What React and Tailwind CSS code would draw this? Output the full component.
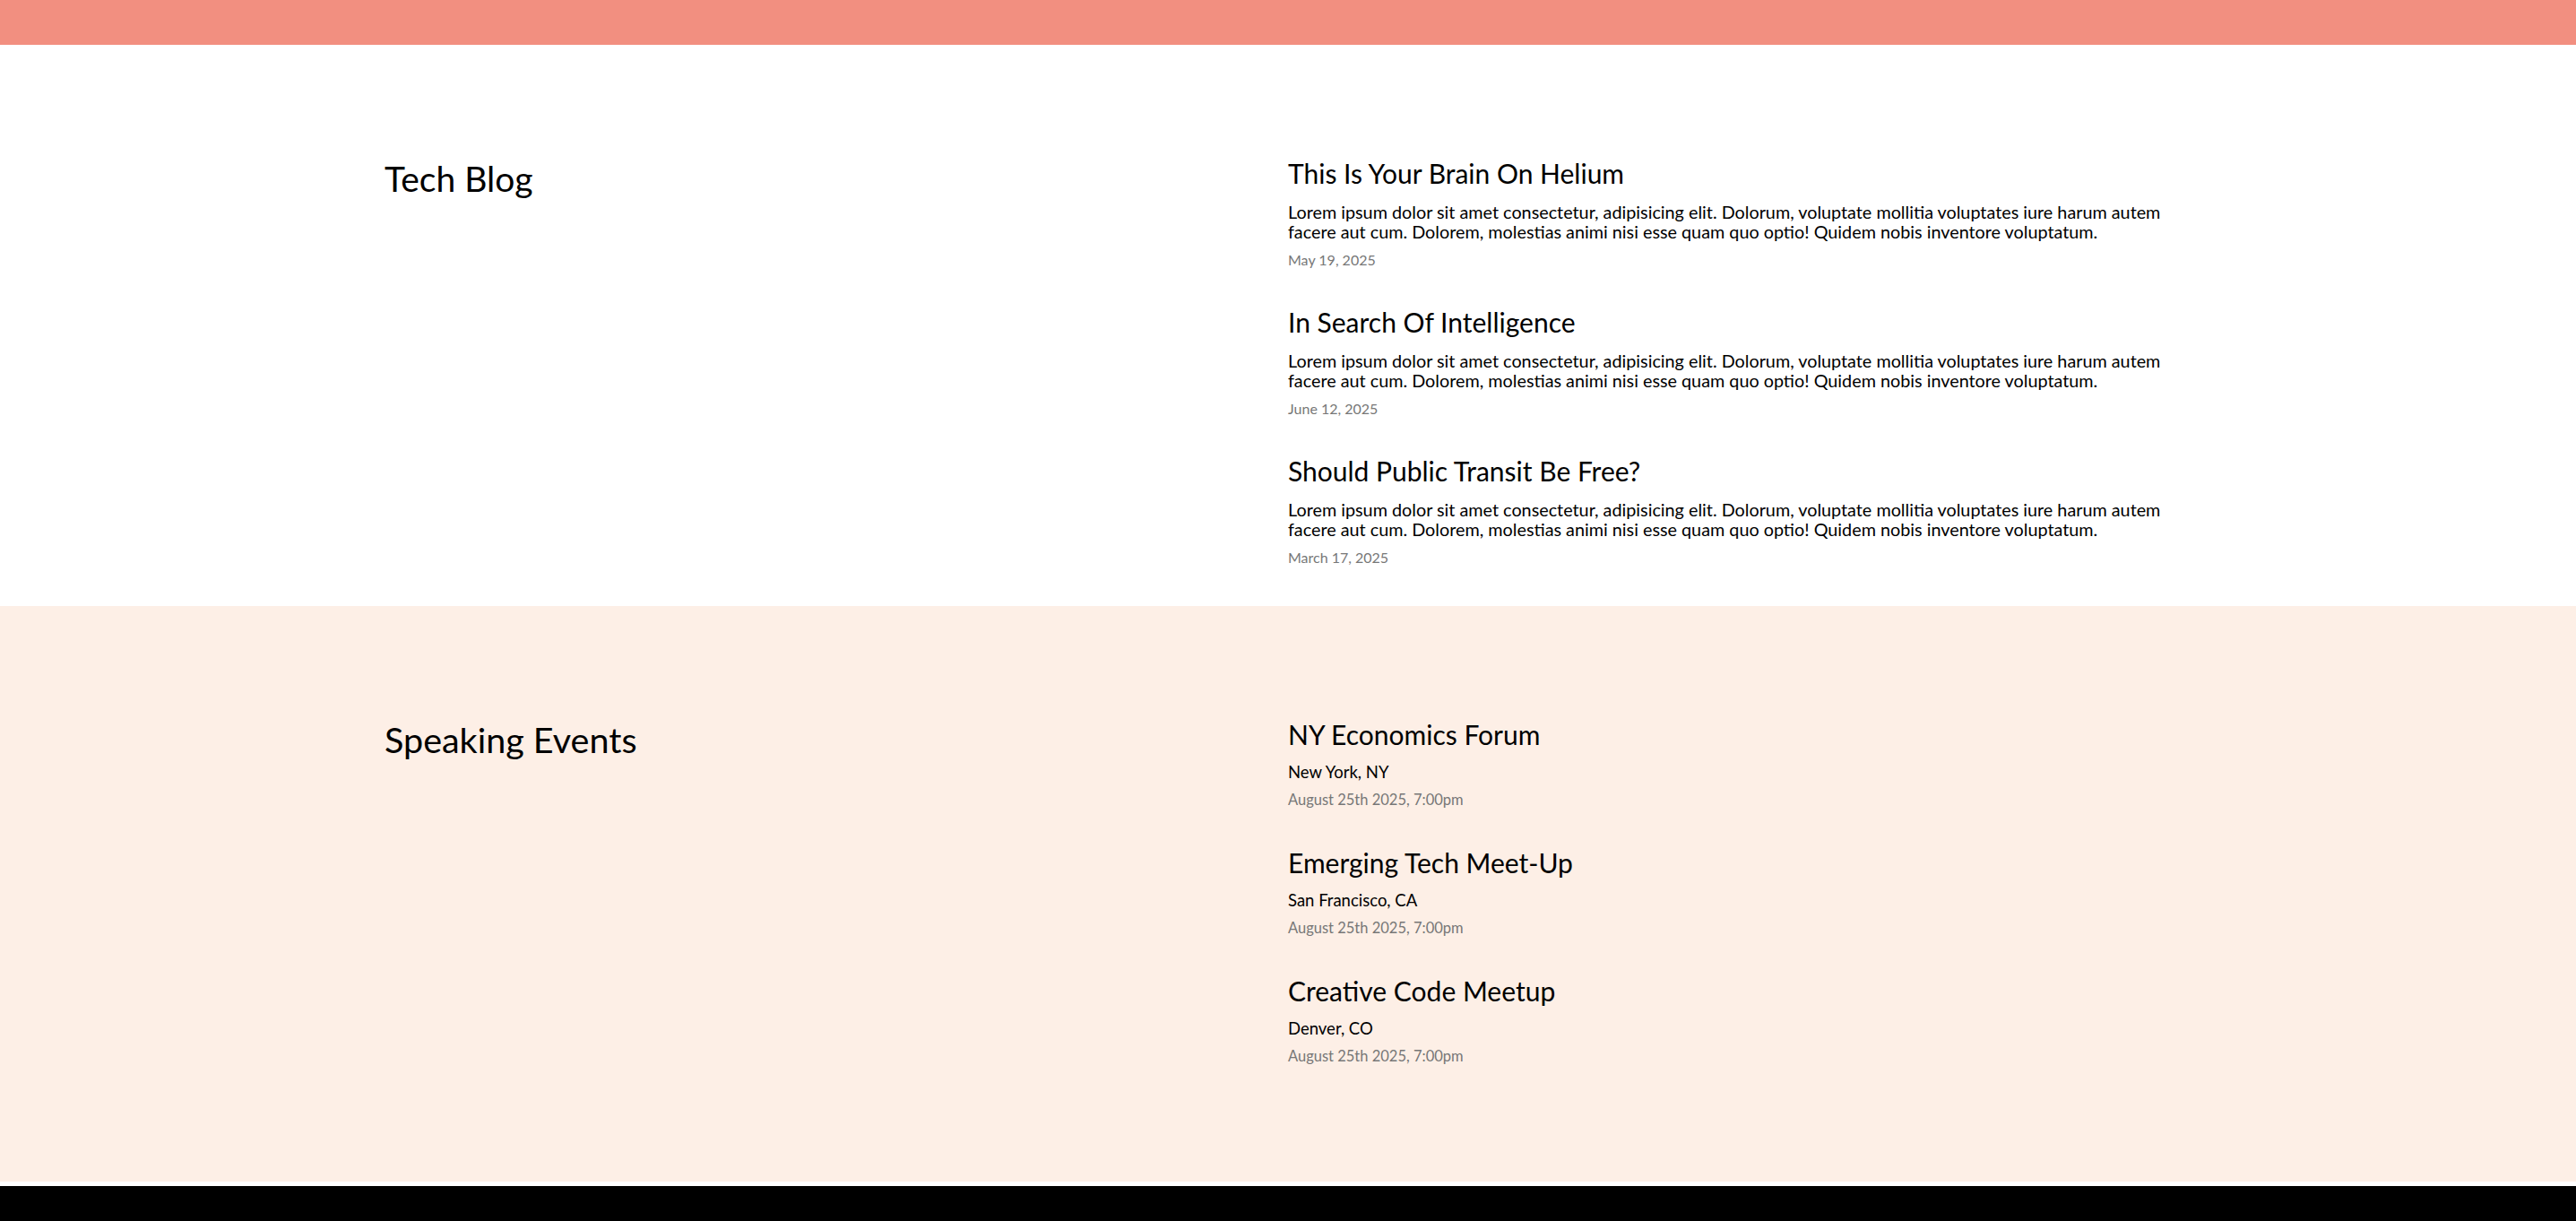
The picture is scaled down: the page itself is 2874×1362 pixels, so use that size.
import React from 'react';

const posts = [
  { title: 'This Is Your Brain On Helium', date: 'May 19, 2025' },
  { title: 'In Search Of Intelligence', date: 'June 12, 2025' },
  { title: 'Should Public Transit Be Free?', date: 'March 17, 2025' },
];

const events = [
  { title: 'NY Economics Forum', place: 'New York, NY', when: 'August 25th 2025, 7:00pm' },
  { title: 'Emerging Tech Meet-Up', place: 'San Francisco, CA', when: 'August 25th 2025, 7:00pm' },
  { title: 'Creative Code Meetup', place: 'Denver, CO', when: 'August 25th 2025, 7:00pm' },
];

const lorem =
  'Lorem ipsum dolor sit amet consectetur, adipisicing elit. Dolorum, voluptate mollitia voluptates iure harum autem facere aut cum. Dolorem, molestias animi nisi esse quam quo optio! Quidem nobis inventore voluptatum.';

function BlogPost({ post }) {
  return (
    <article>
      <h3 className="text-[30px] leading-[36px] text-black">{post.title}</h3>
      <p className="mt-[14px] text-[19.8px] leading-[22px] text-black">{lorem}</p>
      <p className="mt-[11px] text-[16px] leading-[20px] text-[#777]">{post.date}</p>
    </article>
  );
}

function EventItem({ event }) {
  return (
    <div>
      <h3 className="text-[30px] leading-[36px] text-black">{event.title}</h3>
      <p className="mt-[13px] text-[18.5px] leading-[22px] text-black">{event.place}</p>
      <p className="mt-[10px] text-[16.5px] leading-[20px] text-[#777]">{event.when}</p>
    </div>
  );
}

export default function App() {
  return (
    <div className="font-['Lato',sans-serif] bg-white">
      <div className="h-[50px] bg-[#f28f80]" />

      <section className="bg-white pt-[125px] pb-[44px]">
        <div className="max-w-[2016px] mx-auto grid grid-cols-2">
          <h2 className="text-[39px] leading-[48px] text-black">Tech Blog</h2>
          <div className="flex flex-col gap-[41px]">
            {posts.map((p) => (
              <BlogPost key={p.title} post={p} />
            ))}
          </div>
        </div>
      </section>

      <section className="bg-[#fdefe6] pt-[125px] pb-[130px]">
        <div className="max-w-[2016px] mx-auto grid grid-cols-2">
          <h2 className="text-[39.5px] leading-[48px] text-black">Speaking Events</h2>
          <div className="flex flex-col gap-[42px]">
            {events.map((e) => (
              <EventItem key={e.title} event={e} />
            ))}
          </div>
        </div>
      </section>

      <footer className="mt-[5px] h-[39px] bg-black" />
    </div>
  );
}
